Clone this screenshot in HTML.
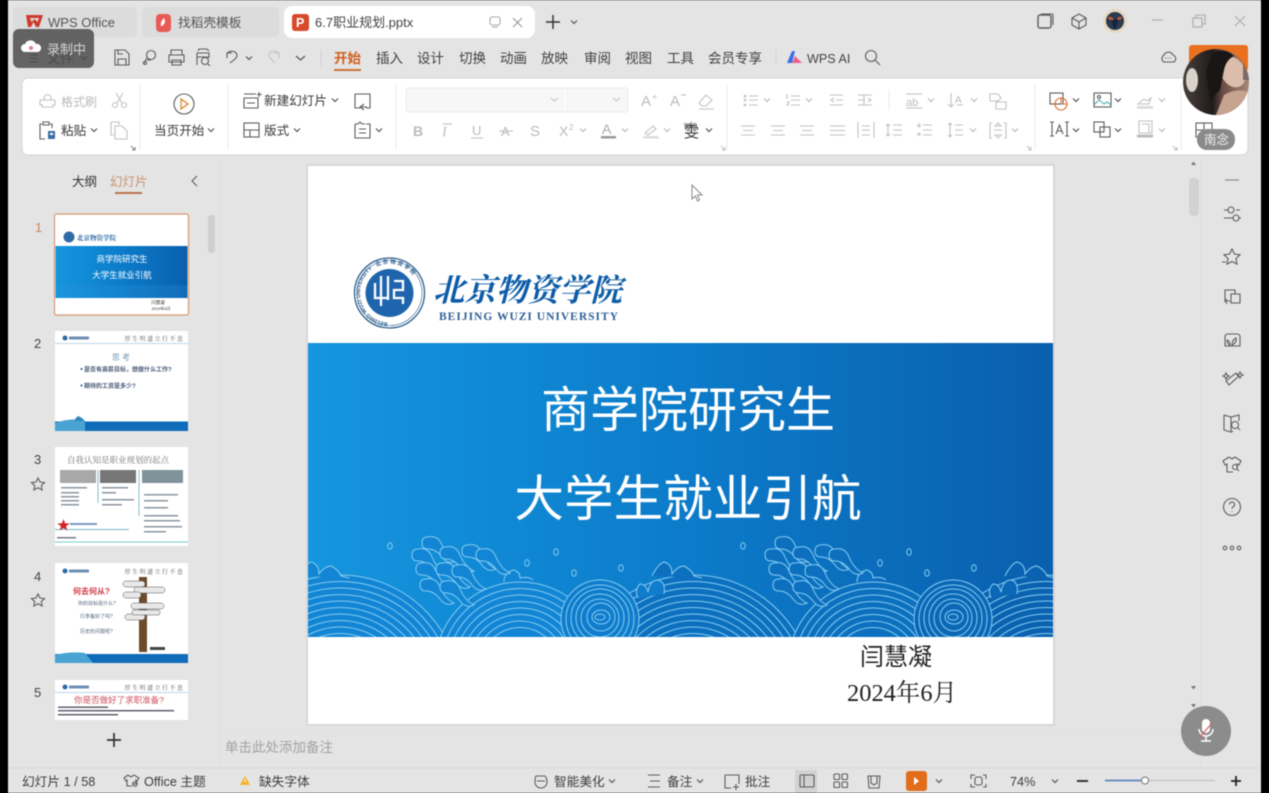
<!DOCTYPE html>
<html><head><meta charset="utf-8"><style>
html,body{margin:0;padding:0;width:1269px;height:793px;overflow:hidden;background:#000}
svg{display:block;filter:blur(.6px)}
text{font-family:"Liberation Sans","Noto Sans CJK SC",sans-serif;white-space:pre}
.i{fill:none;stroke:#5c5c5c;stroke-width:1.1}
.g{fill:none;stroke:#c2c2c2;stroke-width:1.1}
.m{font-size:13.5px;fill:#3f3f3f}
.s{font-size:12.7px;fill:#3d3d3d}
.r{font-size:12.6px;fill:#383838}
.ch{fill:none;stroke:#555;stroke-width:1.2}
.cg{fill:none;stroke:#bbb;stroke-width:1.2}
.sr{font-family:"Liberation Serif","Noto Serif CJK SC",serif}
</style></head><body>
<svg width="1269" height="793" viewBox="0 0 1269 793" xmlns="http://www.w3.org/2000/svg">
<defs>
<linearGradient id="bd" x1="0" x2="1" y1="0" y2="0"><stop offset="0" stop-color="#1596de"/><stop offset=".5" stop-color="#0c7cca"/><stop offset="1" stop-color="#0a5fae"/></linearGradient>
<linearGradient id="hair" x1="0" x2="1" y1="0" y2="0"><stop offset="0" stop-color="#4a403e"/><stop offset=".45" stop-color="#1e1a1a"/><stop offset=".6" stop-color="#6b4c44"/><stop offset="1" stop-color="#a88878"/></linearGradient>
<clipPath id="band"><rect x="308" y="343" width="745" height="294"/></clipPath>
<clipPath id="av"><circle cx="1216" cy="82" r="33"/></clipPath>
<path id="sealp" d="M389.500 322.500a29.500 29.500 0 1 1 .01 0"/>
<path id="c" d="M-3-1.500 0 1.500 3-1.500" class="ch"/>
<path id="cg" d="M-3-1.500 0 1.500 3-1.500" class="cg"/>
<path id="hk" d="M428 537q10-2 14 8q5 12 14 16q-8 4-14-4q-6-8-14-8q-6 0-6-6q0-6 6-6z" fill="currentColor"/>
<g id="ab" fill="none" stroke="#85ccf2" stroke-width="1">
<circle cx="340" cy="695" r="120" fill="currentColor"/><circle cx="340" cy="695" r="113.500"/><circle cx="340" cy="695" r="107"/><circle cx="340" cy="695" r="100.500"/><circle cx="340" cy="695" r="94"/><circle cx="340" cy="695" r="87.500"/><circle cx="340" cy="695" r="81"/><circle cx="340" cy="695" r="74.500"/><circle cx="340" cy="695" r="68"/><circle cx="340" cy="695" r="61.500"/>
<circle cx="520" cy="667" r="85" fill="currentColor"/><circle cx="520" cy="667" r="78.500"/><circle cx="520" cy="667" r="72"/><circle cx="520" cy="667" r="65.500"/><circle cx="520" cy="667" r="59"/><circle cx="520" cy="667" r="52.500"/><circle cx="520" cy="667" r="46"/><circle cx="520" cy="667" r="39.500"/>
<path d="M299 576q6-12 12-14q8 2 8 12q6-8 12-8q8 4 10 10l8 2M504 582q0-10 10-12q6 2 6 8q8-2 13 2" fill="currentColor"/>
<use href="#hk" x="0" y="0"/><use href="#hk" x="-10" y="12"/><use href="#hk" x="-6" y="26"/><use href="#hk" x="18" y="10"/><use href="#hk" x="14" y="26"/><use href="#hk" x="40" y="8"/><use href="#hk" x="30" y="28"/><use href="#hk" x="-2" y="42"/><use href="#hk" x="18" y="44"/><use href="#hk" x="54" y="12"/>
</g>
<g id="sp" fill="none" stroke="#85ccf2" stroke-width="1">
<circle cx="600" cy="619" r="39" fill="currentColor"/><circle cx="600" cy="619" r="34"/><circle cx="600" cy="618" r="29"/><circle cx="600" cy="618" r="24"/><circle cx="600" cy="618" r="19"/><circle cx="601" cy="617" r="14"/><ellipse cx="601" cy="617" rx="9" ry="7"/><ellipse cx="600" cy="617" rx="5" ry="3"/>
<path d="M638 598q-4-8 2-14q6 0 8 8q2-12 10-12q8 2 6 14" fill="currentColor"/>
<ellipse cx="390" cy="546" rx="2.300" ry="3.200"/><ellipse cx="556" cy="552" rx="2.300" ry="3.200"/><ellipse cx="527" cy="563" rx="2.300" ry="3.200"/><ellipse cx="574" cy="573" rx="2.300" ry="3.200"/><ellipse cx="621" cy="568" rx="2.300" ry="3.200"/>
</g>
</defs>
<rect width="1269" height="793" fill="#000"/>
<rect x="8" y="0" width="1253" height="793" fill="#e4e4e4"/>

<!-- tabs -->
<rect x="13" y="7" width="124" height="30" rx="5" fill="#dcdcdc"/>
<rect x="142" y="7" width="137" height="30" rx="5" fill="#dcdcdc"/>
<rect x="284" y="6" width="251" height="32" rx="8" fill="#fff"/>
<path d="M26 15h17l-4 12h-3l-2.500-5-2.500 5h-3zM30 18l1.500 4 3-3 3 3 1.500-4z" fill="#d0392e" fill-rule="evenodd"/>
<text x="48" y="27" font-size="13" fill="#555">WPS Office</text>
<rect x="156" y="14" width="15" height="18" rx="4" fill="#e85a55"/><path d="M161 26q-1-4 3-8q2 4 0 6q-1 2-3 2z" fill="#fff"/>
<text x="178" y="27" font-size="12.700" fill="#555">找稻壳模板</text>
<rect x="292" y="14" width="17" height="17" rx="3" fill="#d8492c"/><text x="296" y="27" font-size="12.500" font-weight="bold" fill="#fff">P</text>
<text x="315" y="27" font-size="13" fill="#444">6.7职业规划.pptx</text>
<rect x="490" y="17" width="10" height="8" rx="2" class="g" style="stroke:#aaa"/><path d="M492 27h6" class="g" style="stroke:#aaa"/>
<path d="M513 18l9 9m0-9l-9 9" class="i" style="stroke:#999"/>
<path d="M546 22h14M553 15v14" class="i" style="stroke:#333;stroke-width:1.500"/>
<use href="#c" x="574" y="22"/>
<!-- window controls -->
<rect x="1038" y="15" width="13" height="13" rx="2" class="i" style="stroke-width:1.400"/><path d="M1041 14h11a1 1 0 0 1 1 1v10" class="i"/>
<path d="M1079 14l7 4v7l-7 4-7-4v-7zM1072 18l7 4 7-4M1079 22v7" class="i"/>
<circle cx="1115" cy="21" r="12" fill="#e6d9c0"/><circle cx="1115" cy="21" r="9" fill="#2c3a50"/><path d="M1106 19h18l-6 2-2 7h-3l-1-7z" fill="#14233f"/><path d="M1108 17h4l2 3h-5zM1118 17h4l-1 3h-4z" fill="#c25a3a"/>
<path d="M1152 20h11" class="i" style="stroke:#aaa"/>
<rect x="1193" y="18" width="9" height="9" class="i" style="stroke:#aaa"/><path d="M1196 18v-3h9v9h-3" class="i" style="stroke:#aaa"/>
<path d="M1235 16l10 10m0-10l-10 10" class="i" style="stroke:#aaa"/>

<!-- menu row -->
<path d="M30 55h8M30 58.500h8M30 62h8" class="i"/>
<text x="47" y="63" font-size="13.500" fill="#555">文件</text><use href="#c" x="84" y="58"/>
<path d="M115 50h10l4 4v11h-14zM118 65v-6h8v6M118 50v4h5" class="i"/>
<circle cx="151" cy="55" r="4.500" class="i"/><path d="M147 58l-3 5M151 60h-4" class="i"/><circle cx="145" cy="63" r="1.500" class="i"/>
<path d="M171 55v-5h11v5M169 55h15v7h-15zM172 60h9v5h-9z" class="i"/>
<path d="M197 65v-12h12v5M197 57h12M198 51l1-2h8l2 2" class="i"/><circle cx="205" cy="61" r="3.500" class="i"/><path d="M208 64l2 2" class="i"/>
<path d="M227 53q4-3 8-1 4 3 0 7l-5 4M227 53v5M227 53h5" class="i"/><use href="#c" x="249" y="58"/>
<path d="M279 53q-4-3-8-1-4 3 0 7l4 4M279 53v5M279 53h-5" class="g"/>
<path d="M296 56l4.500 4 4.500-4" class="ch"/>
<path d="M321 50v16" class="g" style="stroke:#d2d2d2"/>
<text x="334" y="63" font-size="13.500" font-weight="bold" fill="#d0601e">开始</text><rect x="334" y="69" width="27" height="2" fill="#d0703a"/>
<text class="m" x="376" y="63">插入</text><text class="m" x="417" y="63">设计</text><text class="m" x="459" y="63">切换</text><text class="m" x="500" y="63">动画</text><text class="m" x="541" y="63">放映</text><text class="m" x="584" y="63">审阅</text><text class="m" x="625" y="63">视图</text><text class="m" x="667" y="63">工具</text><text class="m" x="708" y="63">会员专享</text>
<path d="M776 50v14" class="g" style="stroke:#d2d2d2"/>
<path d="M787 63l5-12h3l-3 12z" fill="#3a6fe8"/><path d="M792 63l3-7 7 7z" fill="#ef5f8c"/>
<text x="807" y="63" font-size="12.600" fill="#444">WPS AI</text>
<circle cx="871" cy="56" r="5.500" class="i"/><path d="M875 60l5 5" class="i"/>
<path d="M1164 61a4 4 0 0 1 0-7 5 5 0 0 1 9 0 4 4 0 0 1 1 7z" class="i" transform="translate(0,1)"/><path d="M1165 58h1m1.500 0h1m1.500 0h1" class="i"/>
<rect x="1189" y="45" width="59" height="26" rx="3" fill="#e8701f"/>

<!-- ribbon -->
<rect x="22" y="78" width="1226" height="77" rx="6" fill="#fff" stroke="#d4d4d4"/>
<g stroke="#ececec"><path d="M140 84v66M228 84v66M396 84v66M727 84v66M889 90v20M1035 84v66M1181 84v66"/></g>
<!-- clipboard -->
<path d="M40 100h15v5h-2v2h-11v-2h-2zM44 100v-3q4-5 7 0v3M42 104v3" class="g"/>
<text x="61" y="106" font-size="12" fill="#bbb">格式刷</text>
<circle cx="115" cy="105" r="2.500" class="g"/><circle cx="124" cy="105" r="2.500" class="g"/><path d="M117 103l6-10M122 103l-6-10" class="g"/>
<path d="M42 124h-2v15h5M50 124h2v4M43 122h6v3h-6z" class="i"/><rect x="48" y="131" width="7" height="8" fill="#3b6ea8"/><rect x="50" y="133" width="3" height="2" fill="#fff"/>
<text class="r" x="61" y="135">粘贴</text><use href="#c" x="94" y="130"/>
<path d="M111 122h8v3M111 122v13h3M115 126h7l5 5v8h-12z" class="g"/>
<path d="M131 146l4 4m0-3v3h-3" class="i" style="stroke:#888"/>
<!-- play -->
<circle cx="184" cy="104" r="10" class="i"/><path d="M181 99l7 5-7 5z" fill="none" stroke="#e09040" stroke-width="1.400"/>
<text class="r" x="154" y="135">当页开始</text><use href="#c" x="211" y="130"/>
<!-- slide -->
<path d="M244 94h12M244 98h14v10h-14zM247 103h8M259 92v5M257 94.500h5" class="i"/>
<text class="r" x="264" y="105">新建幻灯片</text><use href="#c" x="335" y="100"/>
<rect x="244" y="123" width="15" height="14" class="i"/><path d="M244 130h15M250 130v7" class="i"/>
<text class="r" x="264" y="135">版式</text><use href="#c" x="297" y="130"/>
<path d="M355 94h15v14h-4M355 94v14h5M364 104l-4 3 4 3M360 107h7" class="i"/>
<path d="M355 124h3l2-2 2 2h3M355 124v14h15v-14h-4M359 129h7M359 133h7" class="i"/><use href="#c" x="379" y="130"/>
<!-- font -->
<rect x="406" y="88" width="222" height="24" rx="2" fill="#f7f7f7" stroke="#ececec"/>
<path d="M551 98l3.500 3 3.500-3M613 98l3.500 3 3.500-3" class="g"/><path d="M565 90v20" stroke="#fff"/>
<text x="641" y="106" font-size="15" fill="#bbb">A</text><text x="652" y="100" font-size="9" fill="#bbb">+</text>
<text x="670" y="106" font-size="15" fill="#bbb">A</text><path d="M681 95h5" class="g"/>
<path d="M699 103l7-8 6 5-6 6h-4zM699 109h15" class="g"/>
<text x="413" y="136" font-size="14" font-weight="bold" fill="#bbb">B</text>
<text x="442" y="136" font-size="14" font-style="italic" fill="#bbb" class="sr">I</text><path d="M443 124h9" class="g"/>
<text x="472" y="135" font-size="13" fill="#bbb">U</text><path d="M471 138h12" class="g"/>
<text x="501" y="136" font-size="13" fill="#bbb">A</text><path d="M499 131h14" class="g"/>
<text x="530" y="136" font-size="15" fill="#bbb">S</text>
<text x="559" y="136" font-size="14" fill="#bbb">X</text><text x="569" y="130" font-size="8" fill="#bbb">2</text><use href="#cg" x="583" y="130"/>
<text x="602" y="134" font-size="14" fill="#aaa">A</text><rect x="601" y="136" width="15" height="2.500" fill="#999"/><use href="#cg" x="625" y="130"/>
<path d="M645 133l8-7 3 3-8 6zM644 138h15" class="g"/><rect x="643" y="136" width="15" height="2.500" fill="#ddd"/><use href="#cg" x="667" y="130"/>
<text x="684" y="137" font-size="15" fill="#333">雯</text><text x="684" y="127" font-size="7" fill="#333">wén</text><use href="#c" x="709" y="130"/>
<g class="g"><circle cx="745" cy="96" r=".8"/><circle cx="745" cy="100" r=".8"/><circle cx="745" cy="105" r=".8"/><path d="M749 96h9M749 100h9M749 105h9"/><use href="#cg" x="767" y="100"/>
<path d="M787 94v5M787 102h2l-2 3h2M791 96h9M791 100h9M791 105h9"/><use href="#cg" x="809" y="100"/>
<path d="M830 95h13M836 100h7M830 105h13M834 98l-3 2 3 2"/><path d="M858 95h14M858 105h14M858 100h7M868 98l3 2-3 2M864 95v10"/>
<path d="M906 94h16"/><text x="906" y="106" font-size="11" fill="#bbb" stroke="none">ab</text><path d="M906 108h16"/><use href="#cg" x="931" y="100"/>
<path d="M951 93v14M948 104l3 3 3-3"/><text x="955" y="103" font-size="10" fill="#bbb" stroke="none">A</text><path d="M957 105h6"/><use href="#cg" x="974" y="100"/>
<path d="M990 94h8l3 4-3 3h-8zM996 102h10v7h-10z"/>
<path d="M741 126h14M743 130.500h10M741 135h14"/><path d="M770 126h14M772 130.500h10M770 135h14" transform="translate(1,0)"/><path d="M800 126h14M802 130.500h10M800 135h14"/><path d="M830 126h15M830 130.500h15M830 135h15"/>
<path d="M858 122v16M874 122v16M862 126h8M862 130h8M862 135h8"/>
<path d="M888 124v12M886 126l2-2 2 2M886 134l2 2 2-2M893 125h9M893 130h9M893 135h9"/><path d="M919 126v-3M919 133v3M917 125l2 2 2-2M917 135l2-2 2 2M923 125h9M923 130h9M923 135h9"/>
<path d="M950 123v14M948 125l2-2 2 2M948 135l2 2 2-2M955 125h8M955 130h8M955 135h8"/><use href="#cg" x="973" y="130"/>
<path d="M992 123h-2v15h2M1004 123h2v15h-2M998 123l3 3h-6zM998 138l3-3h-6zM994 130h8"/><use href="#cg" x="1015" y="130"/>
<use href="#cg" x="1162" y="100"/><path d="M1138 104l6-5 3 2 4-3-2 6zM1137 108h16"/><rect x="1137" y="106" width="16" height="2" fill="#ddd" stroke="none"/>
<path d="M1139 121h13v12h-13zM1142 124h7v9M1137 135h16"/><rect x="1137" y="135" width="16" height="2.500" fill="#bbb" stroke="none"/><use href="#cg" x="1162" y="130"/>
</g>
<g class="i">
<rect x="1050" y="93" width="13" height="11"/><circle cx="1061" cy="104" r="6" style="stroke:#d96a2c"/><path d="M1061 98v6h6" style="stroke:#d96a2c"/>
<rect x="1094" y="93" width="17" height="14"/><circle cx="1099" cy="97" r="1.500"/><path d="M1094 105l5-5 5 4 3-2 4 3" style="stroke:#5aa"/>
<path d="M1052 122v14M1067 122v14M1050 122h4M1050 136h4M1065 122h4M1065 136h4"/><path d="M1056 134l3.500-9 3.500 9M1057.500 131h4"/>
<rect x="1094" y="122" width="10" height="10"/><rect x="1100" y="127" width="10" height="10"/>
</g>
<use href="#c" x="1076" y="100"/><use href="#c" x="1118" y="100"/><use href="#c" x="1076" y="130"/><use href="#c" x="1118" y="130"/>
<rect x="1196" y="123" width="16" height="14" class="i"/><path d="M1196 130h16M1204 123v7" class="i"/>
<path d="M721 146l4 4m0-3v3h-3M1027 146l4 4m0-3v3h-3M1173 146l4 4m0-3v3h-3" class="g"/>

<!-- left panel -->
<path d="M220 160v608" stroke="#dedede"/>
<path d="M1201 160v608" stroke="#dedede"/>
<text x="72" y="186" font-size="12.500" fill="#333">大纲</text>
<text x="110" y="186" font-size="12.500" fill="#c99270">幻灯片</text>
<rect x="115" y="192" width="27" height="2" fill="#b9744c"/>
<path d="M197 176l-5 5 5 5" class="i"/>
<text x="35" y="232" font-size="13" fill="#c9875e">1</text>
<text x="34" y="348" font-size="13" fill="#444">2</text>
<text x="34" y="464" font-size="13" fill="#444">3</text>
<text x="34" y="581" font-size="13" fill="#444">4</text>
<text x="34" y="697" font-size="13" fill="#444">5</text>
<path d="M38 478l2 4 4.500.6-3.200 3 .8 4.400-4.100-2.200-4.100 2.200.8-4.400-3.200-3 4.500-.6z" class="i"/>
<path d="M38 594l2 4 4.500.6-3.200 3 .8 4.400-4.100-2.200-4.100 2.200.8-4.400-3.200-3 4.500-.6z" class="i"/>
<rect x="208" y="215" width="7" height="38" rx="3" fill="#cfcfcf"/>

<!-- thumb 1 -->
<rect x="54.500" y="214" width="134" height="101" rx="2" fill="#fff" stroke="#d49a72" stroke-width="1.200"/>
<rect x="55.500" y="246" width="132" height="52" fill="url(#bd)"/>
<circle cx="69" cy="237" r="5.500" fill="#2f6ba6"/>
<text x="77" y="240" font-size="6.500" font-weight="bold" fill="#1f5f9f" class="sr">北京物资学院</text>
<text x="122" y="262" font-size="8.500" fill="#fff" text-anchor="middle">商学院研究生</text>
<text x="122" y="278" font-size="8.500" fill="#fff" text-anchor="middle">大学生就业引航</text>
<rect x="55.500" y="285" width="132" height="13" fill="#2a94d8" opacity=".25"/>
<text x="158" y="304" font-size="4.500" fill="#333" text-anchor="middle">闫慧凝</text>
<text x="161" y="310" font-size="4" fill="#333" text-anchor="middle">2024年6月</text>
<!-- thumb 2 -->
<rect x="55" y="331" width="133" height="100" fill="#fff"/>
<circle cx="65" cy="338" r="2.500" fill="#2f6ba6"/><rect x="69" y="336.500" width="20" height="3" fill="#6d8fb5"/>
<text x="183" y="341" font-size="6" fill="#555" text-anchor="end" class="sr">厚 生 明 道 立 行 不 息</text>
<path d="M55 343.500h133" stroke="#a9c8e0" stroke-width=".8"/>
<text x="121" y="360" font-size="8" fill="#6f95b5" text-anchor="middle">思 考</text>
<circle cx="81.500" cy="369" r="1" fill="#1b4f88"/><text x="84" y="371.500" font-size="6" font-weight="bold" fill="#4a5a78">是否有高薪目标，想做什么工作?</text>
<circle cx="81.500" cy="385.500" r="1" fill="#1b4f88"/><text x="84" y="388" font-size="6" font-weight="bold" fill="#4a5a78">期待的工资是多少?</text>
<rect x="55" y="421.500" width="133" height="9.500" fill="#0f6cb8"/>
<path d="M55 423q18-6 30-2v10h-30z" fill="#4ba3d3"/><path d="M75 419l3-3 4 2 3 3h-10z" fill="#2e88ba"/>
<!-- thumb 3 -->
<rect x="55" y="447" width="133" height="99" fill="#fff"/>
<text x="118" y="463" font-size="8.500" fill="#777" text-anchor="middle" class="sr">自我认知是职业规划的起点</text>
<rect x="60" y="470" width="36" height="13" fill="#a8a8a8"/><rect x="100" y="470" width="36" height="13" fill="#777"/><rect x="142" y="470" width="41" height="13" fill="#80939a"/>
<path d="M98 470v33M139 470v46" stroke="#4fa4b8" stroke-width=".7"/>
<g fill="#8b95a0"><rect x="61" y="487" width="26" height="1.500"/><rect x="61" y="492" width="18" height="1.500"/><rect x="61" y="496" width="18" height="1.500"/><rect x="61" y="500" width="18" height="1.500"/><rect x="61" y="504" width="18" height="1.500"/><rect x="102" y="487" width="26" height="1.500"/><rect x="102" y="492" width="14" height="1.500"/><rect x="102" y="499" width="32" height="1.500"/><rect x="102" y="504" width="20" height="1.500"/><rect x="144" y="494" width="34" height="1.500"/><rect x="144" y="500" width="24" height="1.500"/><rect x="144" y="507" width="24" height="1.500"/><rect x="144" y="515" width="34" height="1.500"/><rect x="144" y="520" width="36" height="1.500"/><rect x="144" y="526" width="38" height="1.500"/><rect x="144" y="531" width="22" height="1.500"/></g>
<path d="M63.500 519l1.600 4.400h4.700l-3.800 2.800 1.400 4.500-3.900-2.700-3.900 2.700 1.400-4.500-3.800-2.800h4.700z" fill="#d42027"/>
<rect x="70" y="523" width="27" height="2" fill="#7d9ac0"/>
<path d="M55 529.500h74" stroke="#4fa4b8" stroke-width=".8"/>
<rect x="57" y="537" width="19" height="1.500" fill="#778"/>
<path d="M55 542h133" stroke="#7cc" stroke-width="1"/>
<!-- thumb 4 -->
<rect x="55" y="563" width="133" height="100" fill="#fff"/>
<circle cx="65" cy="571" r="2.500" fill="#2f6ba6"/><rect x="69" y="569.500" width="20" height="3" fill="#6d8fb5"/>
<text x="183" y="574" font-size="6" fill="#555" text-anchor="end" class="sr">厚 生 明 道 立 行 不 息</text>
<text x="73" y="594" font-size="8" font-weight="bold" fill="#cc3a44">何去何从?</text>
<text x="78" y="605" font-size="5" fill="#5a6a80">你的目标是什么?</text>
<text x="80" y="618" font-size="5" fill="#5a6a80">行李备好了吗?</text>
<text x="80" y="633" font-size="5" fill="#5a6a80">历史的问题呢?</text>
<rect x="139" y="577" width="8" height="75" fill="#6d4a2c"/>
<g fill="#e8e8e8" stroke="#555" stroke-width=".5"><rect x="123" y="581" width="22" height="6" rx="3"/><rect x="134" y="587" width="31" height="6" rx="3"/><rect x="123" y="592" width="18" height="6" rx="3"/><rect x="131" y="603" width="33" height="6" rx="3"/><rect x="125" y="614" width="20" height="6" rx="3"/><rect x="132" y="610" width="28" height="5" rx="2"/></g>
<rect x="150" y="647" width="15" height="3" fill="#444"/>
<rect x="55" y="654" width="133" height="9" fill="#0f6cb8"/>
<path d="M55 655q15-4 30-2l8 10h-38z" fill="#4ba3d3"/>
<!-- thumb 5 -->
<rect x="55" y="680" width="133" height="40" fill="#fff"/>
<circle cx="65" cy="687" r="2.500" fill="#2f6ba6"/><rect x="69" y="685.500" width="20" height="3" fill="#6d8fb5"/>
<text x="183" y="690" font-size="6" fill="#555" text-anchor="end" class="sr">厚 生 明 道 立 行 不 息</text>
<path d="M55 692.500h133" stroke="#a9c8e0" stroke-width=".8"/>
<text x="119" y="703" font-size="8.500" fill="#d0505c" text-anchor="middle">你是否做好了求职准备?</text>
<g fill="#556"><rect x="58" y="706.500" width="50" height="1.400"/><rect x="58" y="710" width="116" height="1.400"/><rect x="58" y="714" width="60" height="1.400"/></g>
<rect x="54" y="720" width="140" height="6" fill="#e4e4e4"/>
<path d="M107 740h14M114 733v14" stroke="#333" stroke-width="1.700"/>

<!-- slide -->
<rect x="306" y="164" width="749" height="562" fill="#d8d8d8"/>
<rect x="308" y="166" width="745" height="558" fill="#fff"/>
<rect x="308" y="343" width="745" height="294" fill="url(#bd)"/>
<g clip-path="url(#band)">
<use href="#ab" x="706" style="color:#0a62b0"/>
<use href="#ab" style="color:#1285d4"/>
<use href="#ab" x="353" style="color:#0d70bf"/>
<use href="#sp" style="color:#0f7ccc"/>
<use href="#sp" x="353" style="color:#0b68b6"/>
</g>
<text x="688" y="427" font-size="49" fill="#fff" text-anchor="middle">商学院研究生</text>
<text x="688" y="516" font-size="49.600" fill="#fff" text-anchor="middle">大学生就业引航</text>
<!-- seal -->
<circle cx="389.500" cy="293" r="35" fill="#fff" stroke="#2c5f8f" stroke-width="1.300"/>
<circle cx="389.500" cy="293" r="32.500" fill="none" stroke="#2c5f8f" stroke-width=".6"/>
<circle cx="389.500" cy="293" r="24" fill="#1f65ad"/>
<text font-size="5.500" fill="#2c5f8f" font-weight="bold"><textPath href="#sealp" startOffset="2">BEIJING WUZI UNIVERSITY   北 京 物 资 学 院</textPath></text>
<path d="M375 283v15h14M381 276v30M388 276v24M394 281h9v9h-9v8h9v6" fill="none" stroke="#fff" stroke-width="2.300"/>
<text x="433" y="301" font-size="31.500" font-weight="bold" font-style="italic" fill="#0e5ca8" class="sr">北京物资学院</text>
<text x="439" y="320" font-size="11.500" font-weight="bold" fill="#2f6096" letter-spacing="1" style="font-family:'Liberation Serif',serif">BEIJING WUZI UNIVERSITY</text>
<text x="860" y="665" font-size="24" fill="#222">闫慧凝</text>
<text x="847" y="701" font-size="24.500" fill="#222" class="sr" textLength="110" lengthAdjust="spacingAndGlyphs">2024年6月</text>
<!-- cursor -->
<path d="M692 185v14l3.500-3 2 5 2-1-2-5h4.500z" fill="#fff" stroke="#888"/>

<!-- right scroll / toolbar -->
<rect x="1189" y="178" width="10" height="38" rx="4" fill="#d2d2d2"/>
<path d="M1191 165l2.500-3.500 2.500 3.500z" fill="#777"/>
<path d="M1191 686l2.500 3.500 2.500-3.500z" fill="#777"/>
<path d="M1191 704l2.500 3.500 2.500-3.500z" fill="#777"/>
<g class="i">
<path d="M1225 180h14" style="stroke:#888"/>
<path d="M1224 210h4M1236 210h4M1224 218h9M1239 218h2"/><circle cx="1231" cy="210" r="3"/><circle cx="1236" cy="218" r="3"/>
<path d="M1232 249l2.500 5 5.500.8-4 3.800 1 5.500-5-2.600-5 2.600 1-5.500-4-3.800 5.500-.8zM1222 262h4"/>
<path d="M1225 301v-11h10v4M1231 294h9v9h-9zM1225 301h5M1227 304l-2-3 2-2"/>
<path d="M1225 346v-9q0-3 3-3h9q3 0 3 3v9zM1232 345q0-5 4-7q1 5-4 7zM1230 345q-3-1-3-5q3 1 3 5z"/>
<path d="M1226 381l10-8 3 3-10 9zM1240 372l1 2 2 1-2 1-1 2-1-2-2-1 2-1zM1226 373l1 2 2 1-2 1-1 2-1-2-2-1 2-1z"/>
<path d="M1224 415l7 2 8-2v6M1224 415v15l7 2 2-1M1231 417v14"/><circle cx="1235" cy="425" r="3.500"/><path d="M1238 428l2 2"/>
<path d="M1229 457l3 2 3-2 6 4-2 4-2-1v4M1229 457l-6 4 2 4 2-1v8h6"/><circle cx="1235" cy="467" r="2.500"/><path d="M1237 469l2 2"/>
<circle cx="1232" cy="507" r="8.500"/><path d="M1229.500 504.500a2.500 2.500 0 1 1 3.500 2.300q-1 .6-1 2M1232 511v.8"/>
<circle cx="1225" cy="548" r="1.800"/><circle cx="1232" cy="548" r="1.800"/><circle cx="1239" cy="548" r="1.800"/>
</g>

<!-- notes -->
<path d="M220 734h981" stroke="#e0e0e0"/>
<text x="225" y="752" font-size="13.500" fill="#a2a2a2">单击此处添加备注</text>

<!-- status -->
<path d="M8 768h1253" stroke="#d6d6d6"/>
<text class="s" x="22" y="786">幻灯片 1 / 58</text>
<path d="M128 775l3 2 3-2 5 3-2 3-1-1v4h-4M128 775l-4 3 2 3 1-1v6h5" class="i"/><circle cx="135" cy="784" r="2.200" class="i"/>
<text class="s" x="144" y="786">Office 主题</text>
<path d="M245 776l5 9h-10z" fill="#f0b429"/><path d="M245 779v3" stroke="#fff"/>
<text class="s" x="259" y="786">缺失字体</text>
<path d="M536 777h9q2 2 2 6a6 6 0 0 1-12 0q0-4 1-6zM537 782h8" class="i" transform="translate(0,-1)"/>
<text class="s" x="554" y="786">智能美化</text><use href="#c" x="612" y="781"/>
<path d="M648 775h12M650 781h10M648 787h12" class="i"/>
<text class="s" x="667" y="786">备注</text><use href="#c" x="700" y="781"/>
<path d="M725 775h14v9M731 788h-6v-13M736 784v6M733 787h6" class="i"/>
<text class="s" x="745" y="786">批注</text>
<rect x="795" y="770" width="22" height="23" fill="#d2d2d2"/>
<rect x="800" y="775" width="14" height="12" rx="1" class="i"/><path d="M804 775v12" class="i"/>
<rect x="834" y="774" width="5.500" height="5.500" rx="1" class="i"/><rect x="842" y="774" width="5.500" height="5.500" rx="1" class="i"/><rect x="834" y="782" width="5.500" height="5.500" rx="1" class="i"/><rect x="842" y="782" width="5.500" height="5.500" rx="1" class="i"/>
<path d="M868 776h12l-1 12h-10zM871 776v7l3 2 3-2v-7" class="i"/>
<rect x="906" y="771" width="21" height="20" rx="3" fill="#e26d1a"/><path d="M914 777l5 4-5 4z" fill="#fff"/>
<use href="#c" x="939" y="781"/>
<rect x="975" y="777" width="7" height="8" rx="2" class="i"/><path d="M971 779v-4h4M983 775h3v4M971 784v3h4M983 787h3v-3" class="i"/>
<text class="s" x="1010" y="786">74%</text><use href="#c" x="1055" y="781"/>
<path d="M1077 781h11" stroke="#222" stroke-width="1.800"/>
<path d="M1145 780.500h70" stroke="#c8c8c8" stroke-width="1.500"/><path d="M1105 780.500h40" stroke="#5d86c0" stroke-width="1.800"/>
<circle cx="1145" cy="780.500" r="3.500" fill="#fff" stroke="#777"/>
<path d="M1231 781h10M1236 776v10" stroke="#222" stroke-width="1.800"/>

<!-- overlays -->
<rect x="13" y="29" width="81" height="39" rx="6" fill="#4a4a4a" opacity=".84"/>
<path d="M25 53a4 4 0 0 1 0-8 6 6 0 0 1 11 0 4 4 0 0 1 2 8z" fill="#fff" transform="translate(0,-1)"/><circle cx="31" cy="48" r="2" fill="#e080a0"/>
<text x="47" y="54" font-size="13" fill="#d4d4d4">录制中</text>
<g clip-path="url(#av)">
<rect x="1183" y="49" width="66" height="66" fill="url(#hair)"/>
<ellipse cx="1233" cy="72" rx="12" ry="16" fill="#dcbcaa" transform="rotate(-25 1233 72)"/>
<path d="M1214 52q12-4 20 4-8 4-10 14-2 10-4 20l-10 10-4-30z" fill="#1a1616"/>
<path d="M1216 115l8-20q14-8 26-2v22z" fill="#c6a38f"/>
<ellipse cx="1192" cy="80" rx="6" ry="12" fill="#d8d2ca"/>
<rect x="1243" y="50" width="10" height="30" fill="#7c6a64"/>
</g>
<rect x="1197" y="129" width="38" height="21" rx="10" fill="#8a8a8a"/>
<text x="1204" y="144" font-size="12.500" fill="#eee">南念</text>
<circle cx="1206" cy="731" r="25" fill="#8c8c8c"/>
<rect x="1202" y="719" width="8" height="14" rx="4" fill="#fff"/><path d="M1199 729a7 7 0 0 0 14 0M1206 736v5M1201 741h10" fill="none" stroke="#fff" stroke-width="1.500"/><path d="M1200 737l12-14" stroke="#d9605f" stroke-width="1.200"/>
</svg>
</body></html>
